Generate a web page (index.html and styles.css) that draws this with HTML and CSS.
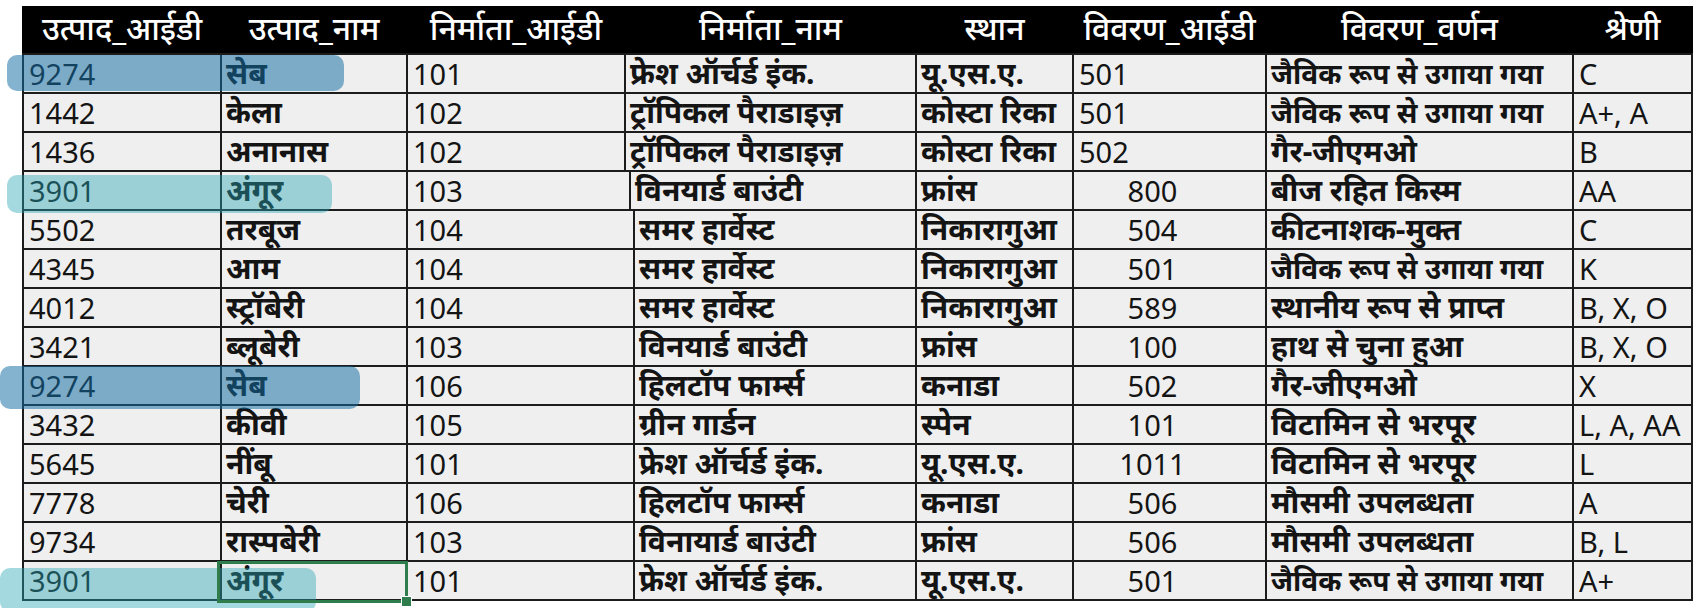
FILE: index.html
```html
<!DOCTYPE html>
<html lang="hi">
<head>
<meta charset="utf-8">
<title>उत्पाद तालिका</title>
<link rel="stylesheet" href="styles.css">
</head>
<body>
<div class="sheet">
  <div class="table">
    <div class="row head">
      <div class="c">उत्पाद_आईडी</div>
      <div class="c">उत्पाद_नाम</div>
      <div class="c">निर्माता_आईडी</div>
      <div class="c">निर्माता_नाम</div>
      <div class="c">स्थान</div>
      <div class="c">विवरण_आईडी</div>
      <div class="c">विवरण_वर्णन</div>
      <div class="c">श्रेणी</div>
    </div>
    <div class="row">
      <div class="c">9274</div><div class="c dv">सेब</div><div class="c">101</div><div class="c dv">फ्रेश ऑर्चर्ड इंक.</div><div class="c dv">यू.एस.ए.</div><div class="c">501</div><div class="c dv fit">जैविक रूप से उगाया गया</div><div class="c">C</div>
    </div>
    <div class="row">
      <div class="c">1442</div><div class="c dv">केला</div><div class="c">102</div><div class="c dv">ट्रॉपिकल पैराडाइज़</div><div class="c dv">कोस्टा रिका</div><div class="c">501</div><div class="c dv fit">जैविक रूप से उगाया गया</div><div class="c">A+, A</div>
    </div>
    <div class="row">
      <div class="c">1436</div><div class="c dv">अनानास</div><div class="c">102</div><div class="c dv">ट्रॉपिकल पैराडाइज़</div><div class="c dv">कोस्टा रिका</div><div class="c">502</div><div class="c dv">गैर-जीएमओ</div><div class="c">B</div>
    </div>
    <div class="row shift1">
      <div class="c">3901</div><div class="c dv">अंगूर</div><div class="c">103</div><div class="c dv">विनयार्ड बाउंटी</div><div class="c dv">फ्रांस</div><div class="c mid">800</div><div class="c dv">बीज रहित किस्म</div><div class="c">AA</div>
    </div>
    <div class="row shift2">
      <div class="c">5502</div><div class="c dv">तरबूज</div><div class="c">104</div><div class="c dv">समर हार्वेस्ट</div><div class="c dv">निकारागुआ</div><div class="c mid">504</div><div class="c dv">कीटनाशक-मुक्त</div><div class="c">C</div>
    </div>
    <div class="row shift2">
      <div class="c">4345</div><div class="c dv">आम</div><div class="c">104</div><div class="c dv">समर हार्वेस्ट</div><div class="c dv">निकारागुआ</div><div class="c mid">501</div><div class="c dv fit">जैविक रूप से उगाया गया</div><div class="c">K</div>
    </div>
    <div class="row shift2">
      <div class="c">4012</div><div class="c dv">स्ट्रॉबेरी</div><div class="c">104</div><div class="c dv">समर हार्वेस्ट</div><div class="c dv">निकारागुआ</div><div class="c mid">589</div><div class="c dv">स्थानीय रूप से प्राप्त</div><div class="c">B, X, O</div>
    </div>
    <div class="row shift2">
      <div class="c">3421</div><div class="c dv">ब्लूबेरी</div><div class="c">103</div><div class="c dv">विनयार्ड बाउंटी</div><div class="c dv">फ्रांस</div><div class="c mid">100</div><div class="c dv">हाथ से चुना हुआ</div><div class="c">B, X, O</div>
    </div>
    <div class="row shift2">
      <div class="c">9274</div><div class="c dv">सेब</div><div class="c">106</div><div class="c dv">हिलटॉप फार्म्स</div><div class="c dv">कनाडा</div><div class="c mid">502</div><div class="c dv">गैर-जीएमओ</div><div class="c">X</div>
    </div>
    <div class="row shift2">
      <div class="c">3432</div><div class="c dv">कीवी</div><div class="c">105</div><div class="c dv">ग्रीन गार्डन</div><div class="c dv">स्पेन</div><div class="c mid">101</div><div class="c dv">विटामिन से भरपूर</div><div class="c">L, A, AA</div>
    </div>
    <div class="row shift2">
      <div class="c">5645</div><div class="c dv">नींबू</div><div class="c">101</div><div class="c dv">फ्रेश ऑर्चर्ड इंक.</div><div class="c dv">यू.एस.ए.</div><div class="c mid">1011</div><div class="c dv">विटामिन से भरपूर</div><div class="c">L</div>
    </div>
    <div class="row shift2">
      <div class="c">7778</div><div class="c dv">चेरी</div><div class="c">106</div><div class="c dv">हिलटॉप फार्म्स</div><div class="c dv">कनाडा</div><div class="c mid">506</div><div class="c dv">मौसमी उपलब्धता</div><div class="c">A</div>
    </div>
    <div class="row shift2">
      <div class="c">9734</div><div class="c dv">रास्पबेरी</div><div class="c">103</div><div class="c dv">विनायार्ड बाउंटी</div><div class="c dv">फ्रांस</div><div class="c mid">506</div><div class="c dv">मौसमी उपलब्धता</div><div class="c">B, L</div>
    </div>
    <div class="row shift2">
      <div class="c">3901</div><div class="c dv">अंगूर</div><div class="c">101</div><div class="c dv">फ्रेश ऑर्चर्ड इंक.</div><div class="c dv">यू.एस.ए.</div><div class="c mid">501</div><div class="c dv fit">जैविक रूप से उगाया गया</div><div class="c">A+</div>
    </div>
  </div>

  <div class="hl hl-1 blue"></div>
  <div class="hl hl-4 teal"></div>
  <div class="hl hl-9 blue"></div>
  <div class="hl hl-14 teal"></div>
  <div class="select"><span class="handle"></span></div>
</div>
</body>
</html>
```

FILE: styles.css
```css
html, body {
  margin: 0;
  padding: 0;
  background: #ffffff;
}

body {
  width: 1696px;
  height: 608px;
  overflow: hidden;
  font-family: "Noto Sans", "Noto Sans Devanagari", "Lohit Devanagari", "FreeSans", sans-serif;
  color: #141414;
}

.sheet {
  position: relative;
  width: 1696px;
  height: 608px;
  padding: 6px 0 0 22px;
  box-sizing: border-box;
}

.table {
  width: 1671px;
  display: flex;
  flex-direction: column;
  gap: 2px;
  background: #1c1c1c;
  padding: 0 2px 2px 2px;
  box-sizing: border-box;
}

.row {
  display: grid;
  grid-template-columns: 196px 184px 216px 289px 155px 191px 305px 117px;
  column-gap: 2px;
  height: 37px;
}

.row.shift1 {
  grid-template-columns: 196px 184px 221px 284px 155px 191px 305px 117px;
}

.row.shift2 {
  grid-template-columns: 196px 184px 225px 280px 155px 191px 305px 117px;
}

.c {
  background: #efefef;
  font-size: 29px;
  line-height: 37px;
  height: 37px;
  padding-left: 5px;
  white-space: nowrap;
}

.c.dv {
  font-size: 30px;
  font-weight: 700;
  line-height: 36px;
  padding-left: 4px;
}

.c.dv.fit {
  font-size: 28px;
  font-weight: 700;
}

.c.mid {
  text-align: center;
  padding-left: 0;
  padding-right: 34px;
}

.row.head {
  height: 47px;
  margin: 0 -2px;
  padding: 0 2px;
  background: #000;
}

.row.head .c {
  background: #000;
  color: #ffffff;
  text-align: center;
  padding: 0;
  height: 47px;
  font-size: 32px;
  font-weight: 500;
  line-height: 44px;
}

.hl {
  position: absolute;
  border-radius: 10px;
  pointer-events: none;
}

.hl.blue {
  background: rgba(20, 110, 165, 0.52);
}

.hl.teal {
  background: rgba(40, 165, 180, 0.42);
}

.hl-1 {
  left: 7px;
  top: 55px;
  width: 337px;
  height: 36px;
}

.hl-4 {
  left: 7px;
  top: 175px;
  width: 325px;
  height: 38px;
}

.hl-9 {
  left: 0;
  top: 366px;
  width: 360px;
  height: 43px;
}

.hl-14 {
  left: 0;
  top: 568px;
  width: 316px;
  height: 44px;
}

.select {
  position: absolute;
  left: 217px;
  top: 561px;
  width: 191px;
  height: 42px;
  box-sizing: border-box;
  border: 3px solid #2f7d4c;
}

.handle {
  position: absolute;
  right: -7px;
  bottom: -7px;
  width: 9px;
  height: 9px;
  background: #2f7d4c;
  border: 1px solid #ffffff;
}
```
